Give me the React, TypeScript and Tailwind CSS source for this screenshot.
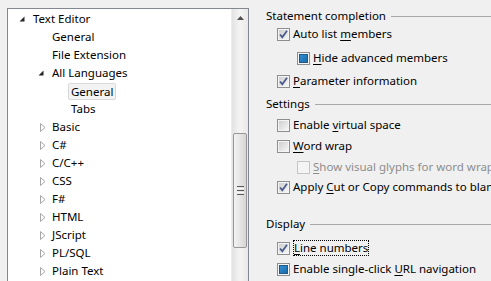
import React from "react";

const FONT = { fontFamily: '"Noto Sans", "Open Sans", sans-serif' };

function ExpandedTri() {
  return (
    <svg width="6" height="6" viewBox="0 0 6 6" className="shrink-0">
      <polygon points="5.5,0.5 5.5,5.5 0.5,5.5" fill="#262626" />
    </svg>
  );
}
function CollapsedTri() {
  return (
    <svg width="6" height="9" viewBox="0 0 6 9" className="ml-[2px] shrink-0">
      <polygon points="0.5,0.5 5,4.5 0.5,8.5" fill="none" stroke="#a6a6a6" strokeWidth="1" />
    </svg>
  );
}

type Node = { label: string; level: number; kind: "exp" | "col" | "leaf"; selected?: boolean };
const nodes: Node[] = [
  { label: "Text Editor", level: 0, kind: "exp" },
  { label: "General", level: 1, kind: "leaf" },
  { label: "File Extension", level: 1, kind: "leaf" },
  { label: "All Languages", level: 1, kind: "exp" },
  { label: "General", level: 2, kind: "leaf", selected: true },
  { label: "Tabs", level: 2, kind: "leaf" },
  { label: "Basic", level: 1, kind: "col" },
  { label: "C#", level: 1, kind: "col" },
  { label: "C/C++", level: 1, kind: "col" },
  { label: "CSS", level: 1, kind: "col" },
  { label: "F#", level: 1, kind: "col" },
  { label: "HTML", level: 1, kind: "col" },
  { label: "JScript", level: 1, kind: "col" },
  { label: "PL/SQL", level: 1, kind: "col" },
  { label: "Plain Text", level: 1, kind: "col" },
];

function TreeRow({ n }: { n: Node }) {
  const pad = 11 + n.level * 19;
  return (
    <div className="flex h-[18px] items-center" style={{ paddingLeft: pad }}>
      <div className="flex w-[12px] justify-start">
        {n.kind === "exp" ? <ExpandedTri /> : n.kind === "col" ? <CollapsedTri /> : null}
      </div>
      {n.selected ? (
        <span className="-ml-[1px] rounded-[2px] border border-[#d9d9d9] bg-[#f3f3f3] px-[2px] leading-[15px] text-black">
          {n.label}
        </span>
      ) : (
        <span className="ml-[2px] text-black">{n.label}</span>
      )}
    </div>
  );
}

function Scrollbar() {
  return (
    <div className="flex w-[17px] shrink-0 flex-col border-l border-[#ededed] bg-gradient-to-r from-[#e3e3e3] via-[#f4f4f4] to-[#e8e8e8]">
      <div className="flex h-[17px] items-center justify-center">
        <svg width="7" height="4" viewBox="0 0 7 4">
          <polygon points="3.5,0 7,4 0,4" fill="#4f4f4f" />
        </svg>
      </div>
      <div className="h-[107px]" />
      <div className="ml-[1px] mr-[1px] flex h-[115px] items-center justify-center rounded-[2px] border border-[#979797] bg-gradient-to-r from-[#f2f2f2] via-[#e6e6e6] to-[#d6d6d6]">
        <div className="flex flex-col gap-[1px]">
          <div className="h-[1px] w-[7px] bg-[#5a5a5a]" />
          <div className="h-[1px] w-[7px] bg-[#f8f8f8]" />
          <div className="h-[1px] w-[7px] bg-[#5a5a5a]" />
          <div className="h-[1px] w-[7px] bg-[#f8f8f8]" />
          <div className="h-[1px] w-[7px] bg-[#5a5a5a]" />
        </div>
      </div>
      <div className="flex-1" />
    </div>
  );
}

type CbState = "checked" | "unchecked" | "indeterminate" | "disabled";

function Checkbox({ state }: { state: CbState }) {
  const disabled = state === "disabled";
  return (
    <div
      className={`relative h-[13px] w-[13px] shrink-0 border ${
        disabled ? "border-[#c5c5c5]" : "border-[#8e8f8f]"
      }`}
    >
      <div
        className={`absolute inset-0 border ${
          disabled ? "border-[#f4f4f4] bg-[#f4f4f4]" : "border-[#f4f4f4] bg-gradient-to-br from-[#cfcfcf] to-[#f6f6f6]"
        }`}
      />
      {state === "checked" && (
        <svg className="absolute left-0 top-0" width="11" height="11" viewBox="0 0 11 11">
          <path d="M2 5.5 L4.3 8.2 L9 1.8" fill="none" stroke="#4a5c8c" strokeWidth="1.8" />
        </svg>
      )}
      {state === "indeterminate" && (
        <div className="absolute left-[1px] top-[1px] h-[9px] w-[9px] border border-[#1d5a8a] bg-gradient-to-br from-[#2f8fd3] to-[#1c6aa8]" />
      )}
    </div>
  );
}

function CbRow({
  state,
  indent,
  mt,
  children,
  focus,
}: {
  state: CbState;
  indent: number;
  mt: number;
  children: React.ReactNode;
  focus?: boolean;
}) {
  return (
    <div className="flex h-[18px] items-center whitespace-nowrap" style={{ paddingLeft: indent, marginTop: mt }}>
      <Checkbox state={state} />
      <span
        className={`ml-[3px] ${state === "disabled" ? "text-[#8d8d8d]" : "text-black"} ${
          focus ? "border border-dotted border-black leading-[14px]" : ""
        }`}
      >
        {children}
      </span>
    </div>
  );
}

function GroupLabel({ text, mt }: { text: string; mt: number }) {
  return (
    <div className="flex h-[18px] items-center pl-[17px]" style={{ marginTop: mt }}>
      <span className="whitespace-nowrap text-black">{text}</span>
      <div className="ml-[5px] h-[1px] flex-1 bg-[#a8a8a8]" />
    </div>
  );
}

const U = ({ c }: { c: string }) => <span className="underline underline-offset-[2px]">{c}</span>;

export default function App() {
  return (
    <div className="flex h-[281px] w-[491px] overflow-hidden bg-[#f0f0f0] text-[11.5px]" style={FONT}>
      <div className="ml-[7px] mt-[8px] flex h-[300px] w-[242px] shrink-0 border border-[#828790] bg-white">
        <div className="flex-1 overflow-hidden pt-[1px]">
          {nodes.map((n, i) => (
            <TreeRow key={i} n={n} />
          ))}
        </div>
        <Scrollbar />
      </div>
      <div className="min-w-0 flex-1 overflow-hidden pt-[7px]">
        <GroupLabel text="Statement completion" mt={0} />
        <CbRow state="checked" indent={28} mt={0}>
          Auto list <U c="m" />embers
        </CbRow>
        <CbRow state="indeterminate" indent={48} mt={6}>
          <U c="H" />ide advanced members
        </CbRow>
        <CbRow state="checked" indent={28} mt={5}>
          <U c="P" />arameter information
        </CbRow>
        <GroupLabel text="Settings" mt={5} />
        <CbRow state="unchecked" indent={28} mt={3}>
          Enable <U c="v" />irtual space
        </CbRow>
        <CbRow state="unchecked" indent={28} mt={3}>
          <U c="W" />ord wrap
        </CbRow>
        <CbRow state="disabled" indent={48} mt={3}>
          <U c="S" />how visual glyphs for word wrap
        </CbRow>
        <CbRow state="checked" indent={28} mt={2}>
          Apply <U c="C" />ut or Copy commands to blank lines when there is no selection
        </CbRow>
        <GroupLabel text="Display" mt={19} />
        <CbRow state="checked" indent={28} mt={6} focus>
          <U c="L" />ine numbers
        </CbRow>
        <CbRow state="indeterminate" indent={28} mt={3}>
          Enable single-click <U c="U" />RL navigation
        </CbRow>
      </div>
    </div>
  );
}
